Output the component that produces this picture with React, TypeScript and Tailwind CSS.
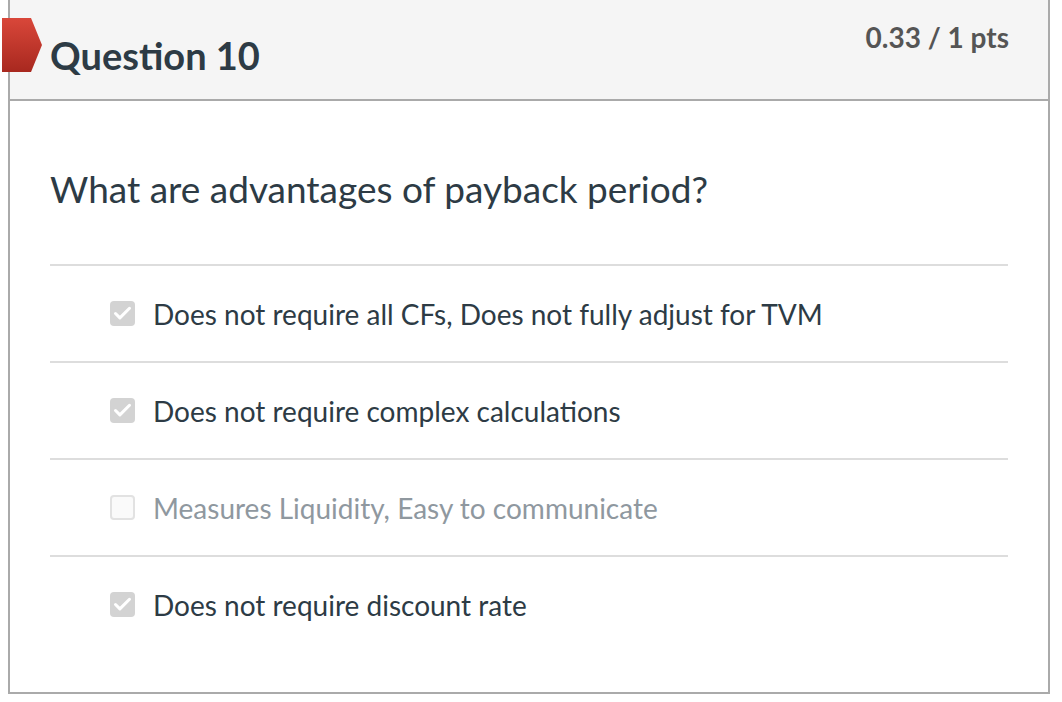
import { Check } from "lucide-react";

type Answer = { text: string; checked: boolean };

const answers: Answer[] = [
  { text: "Does not require all CFs, Does not fully adjust for TVM", checked: true },
  { text: "Does not require complex calculations", checked: true },
  { text: "Measures Liquidity, Easy to communicate", checked: false },
  { text: "Does not require discount rate", checked: true },
];

function Flag() {
  return (
    <svg width="40" height="54" viewBox="0 0 40 54" className="absolute left-[-8px] top-[18px]">
      <defs>
        <linearGradient id="flag" x1="0" y1="0" x2="0" y2="1">
          <stop offset="0" stopColor="#d9473a" />
          <stop offset="1" stopColor="#a8281f" />
        </linearGradient>
      </defs>
      <polygon points="0,0 29,0 40,27 29,54 0,54" fill="url(#flag)" />
    </svg>
  );
}

function Box({ checked }: { checked: boolean }) {
  return (
    <div
      className={
        checked
          ? "w-[25px] h-[25px] rounded-[4px] bg-[#d3d3d3] flex items-center justify-center shrink-0"
          : "w-[25px] h-[25px] rounded-[4px] bg-[#fafafa] border-2 border-[#e2e2e2] shrink-0"
      }
    >
      {checked && <Check size={21} strokeWidth={3.5} color="#ffffff" />}
    </div>
  );
}

export default function App() {
  return (
    <div className="w-[1062px] h-[702px] bg-white font-['Lato',sans-serif] text-[#2d3b45]">
      <div className="relative ml-[8px] w-[1042px] h-[694px] border-2 border-t-0 border-[#aaaaaa]">
        <div className="h-[101px] bg-[#f5f5f5] border-b-2 border-[#aaaaaa] flex items-start justify-between pl-[40px] pr-[39px]">
          <h2 className="mt-[33px] text-[38px] font-bold leading-[44px]">Question 10</h2>
          <div className="mt-[21px] text-[28px] font-bold text-[#555555] leading-[32px]">0.33 / 1 pts</div>
        </div>
        <Flag />
        <div className="px-[40px]">
          <p className="pt-[60px] pb-[47px] text-[37px] leading-[56px]">What are advantages of payback period?</p>
          {answers.map((a) => (
            <div key={a.text} className="border-t-2 border-[#dddddd] h-[97px] flex items-center pl-[60px] gap-[18px]">
              <Box checked={a.checked} />
              <span className={a.checked ? "text-[28px]" : "text-[28px] text-[#8f989f]"}>{a.text}</span>
            </div>
          ))}
        </div>
      </div>
    </div>
  );
}
